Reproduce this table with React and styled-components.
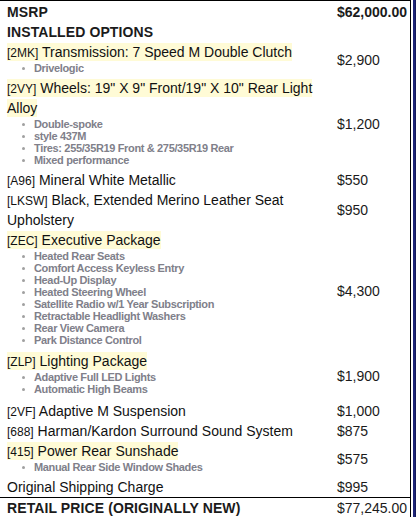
import React from "react";
import styled, { createGlobalStyle } from "styled-components";

const GlobalStyle = createGlobalStyle`
  html, body {
    margin: 0;
    padding: 0;
    background: #ffffff;
  }
  body {
    font-family: "Liberation Sans", Arial, sans-serif;
    color: #111111;
  }
`;

// 옵션 목록
const options = [
  {
    code: "[2MK]",
    title: "Transmission: 7 Speed M Double Clutch",
    subs: ["Drivelogic"],
    price: "$2,900",
  },
  {
    code: "[2VY]",
    title: 'Wheels: 19" X 9" Front/19" X 10" Rear Light Alloy',
    subs: [
      "Double-spoke",
      "style 437M",
      "Tires: 255/35R19 Front & 275/35R19 Rear",
      "Mixed performance",
    ],
    price: "$1,200",
  },
  { code: "[A96]", title: "Mineral White Metallic", price: "$550" },
  {
    code: "[LKSW]",
    title: "Black, Extended Merino Leather Seat Upholstery",
    price: "$950",
  },
  {
    code: "[ZEC]",
    title: "Executive Package",
    subs: [
      "Heated Rear Seats",
      "Comfort Access Keyless Entry",
      "Head-Up Display",
      "Heated Steering Wheel",
      "Satellite Radio w/1 Year Subscription",
      "Retractable Headlight Washers",
      "Rear View Camera",
      "Park Distance Control",
    ],
    price: "$4,300",
    gap: 5,
  },
  {
    code: "[ZLP]",
    title: "Lighting Package",
    subs: ["Adaptive Full LED Lights", "Automatic High Beams"],
    price: "$1,900",
    gap: 6,
  },
  { code: "[2VF]", title: "Adaptive M Suspension", price: "$1,000" },
  {
    code: "[688]",
    title: "Harman/Kardon Surround Sound System",
    price: "$875",
  },
  {
    code: "[415]",
    title: "Power Rear Sunshade",
    subs: ["Manual Rear Side Window Shades"],
    price: "$575",
  },
];

export default function App() {
  return (
    <>
      <GlobalStyle />
      <Page>
        <Sheet>
          <TopStrip>
            <TopCell />
          </TopStrip>
          <Table>
            <Row>
              <HeadLabel>MSRP</HeadLabel>
              <HeadPrice>$62,000.00</HeadPrice>
            </Row>
            <Row>
              <HeadLabel>INSTALLED OPTIONS</HeadLabel>
            </Row>

            {options.map((opt) => (
              <Row key={opt.code}>
                <OptionCell $gap={opt.subs ? opt.gap ?? 4 : 0}>
                  <Title>
                    <Mark $on={!!opt.subs}>
                      <Code>{opt.code}</Code> {opt.title}
                    </Mark>
                  </Title>
                  {opt.subs && (
                    <SubList>
                      {opt.subs.map((s) => (
                        <SubItem key={s}>{s}</SubItem>
                      ))}
                    </SubList>
                  )}
                </OptionCell>
                <Price>{opt.price}</Price>
              </Row>
            ))}

            <Row>
              <OptionCell>
                <Title>Original Shipping Charge</Title>
              </OptionCell>
              <Price>$995</Price>
            </Row>

            <TotalRow>
              <HeadLabel>RETAIL PRICE (ORIGINALLY NEW)</HeadLabel>
              <Price>$77,245.00</Price>
            </TotalRow>
          </Table>
        </Sheet>
        <Gap />
        <Stripe />
      </Page>
    </>
  );
}

const Page = styled.div`
  width: 417px;
  height: 517px;
  display: flex;
  overflow: hidden;
`;

const Sheet = styled.div`
  width: 411px;
  border-right: 1px solid #000;
  box-sizing: border-box;
  display: flex;
  flex-direction: column;
`;

const TopStrip = styled.div`
  height: 1px;
  display: flex;
`;

const TopCell = styled.div`
  width: 111px;
  border-right: 1px solid #333;
  box-sizing: border-box;
`;

const Gap = styled.div`
  width: 2px;
`;

const Stripe = styled.div`
  width: 3px;
  background: #1e2578;
  box-shadow: inset -1px 0 0 #151a5a;
`;

const Table = styled.div`
  border-top: 1px solid #000;
  display: flex;
  flex-direction: column;
  padding-top: 1px;
`;

const Row = styled.div`
  display: grid;
  grid-template-columns: 336px 1fr;
  align-items: center;
`;

const TotalRow = styled(Row)`
  border-top: 1px solid #000;
`;

const HeadLabel = styled.div`
  padding-left: 7px;
  font-size: 14px;
  font-weight: bold;
  line-height: 20px;
  color: #1b1b1b;
  letter-spacing: 0.1px;
`;

const HeadPrice = styled.div`
  padding-left: 1px;
  font-size: 14px;
  font-weight: bold;
  line-height: 20px;
  color: #1b1b1b;
`;

const OptionCell = styled.div`
  padding-left: 7px;
  padding-bottom: ${(p) => p.$gap || 0}px;
`;

const Title = styled.div`
  font-size: 14px;
  line-height: 20px;
  color: #111;
`;

const Mark = styled.span`
  background: ${(p) => (p.$on ? "#fffbd6" : "transparent")};
  padding: 1px 0;
`;

const Code = styled.span`
  font-size: 12px;
  line-height: 1;
`;

const SubList = styled.ul`
  margin: 0;
  padding: 0 0 0 15px;
  list-style: none;
`;

const SubItem = styled.li`
  display: flex;
  align-items: center;
  font-size: 11px;
  font-weight: bold;
  letter-spacing: -0.35px;
  line-height: 12px;
  color: #80808a;

  &::before {
    content: "";
    width: 3px;
    height: 3px;
    border-radius: 50%;
    background: #a0a0a0;
    margin-right: 9px;
    flex-shrink: 0;
  }
`;

const Price = styled.div`
  padding-left: 1px;
  font-size: 14px;
  line-height: 20px;
  color: #1b1b1b;
`;
